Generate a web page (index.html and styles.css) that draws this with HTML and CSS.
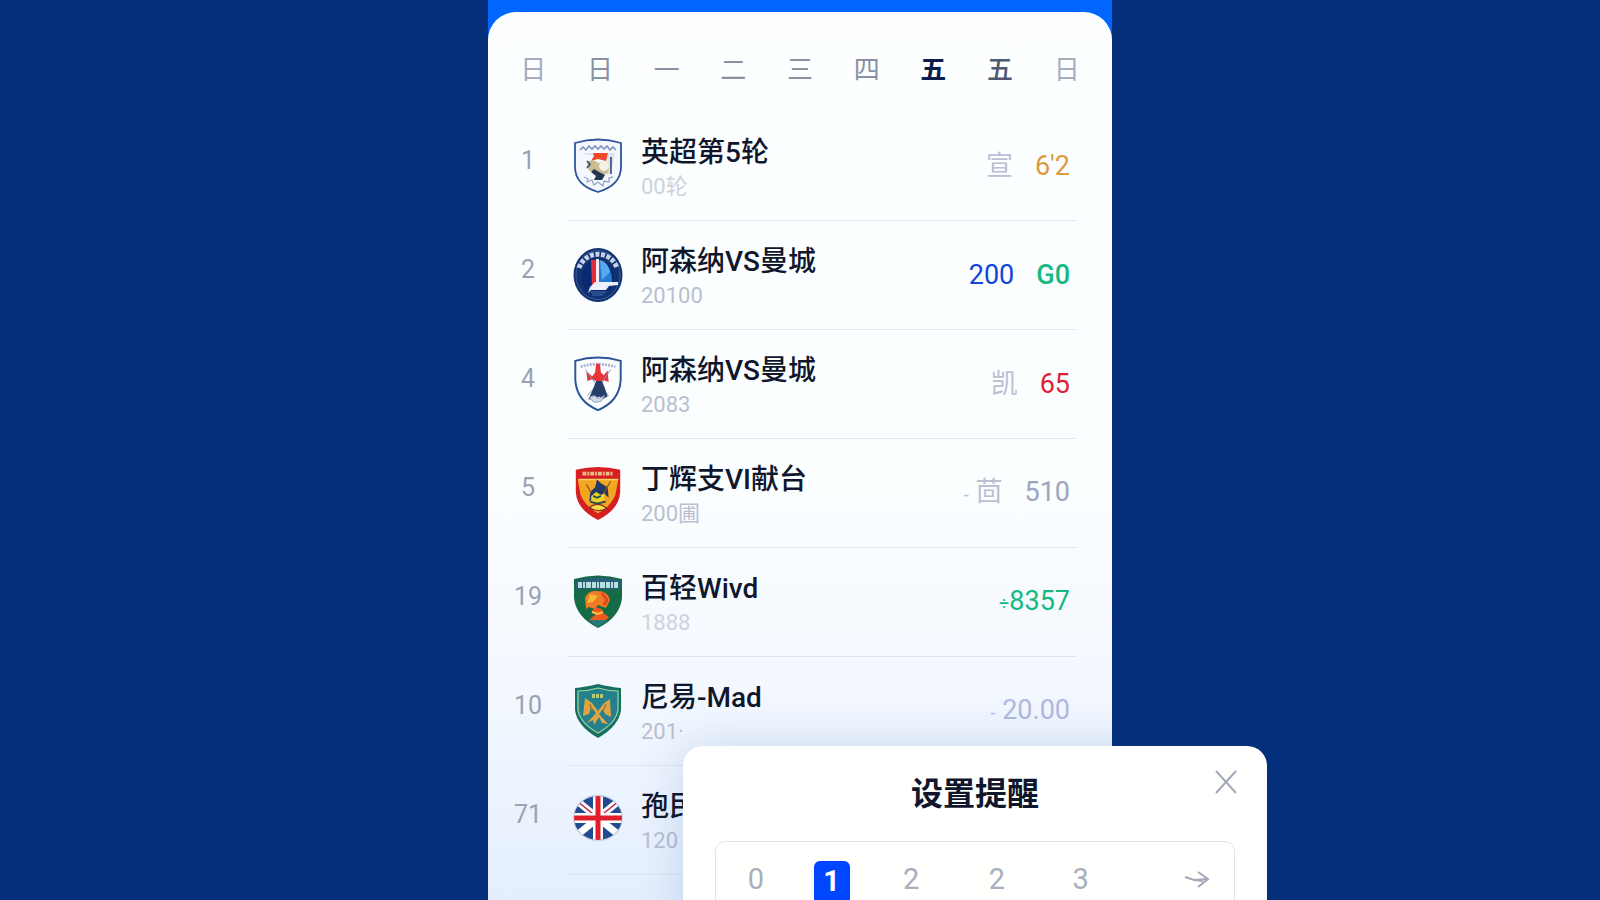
FILE: index.html
```
<!DOCTYPE html>
<html lang="zh-CN">
<head>
  <meta charset="UTF-8">
  <meta name="viewport" content="width=device-width, initial-scale=1.0">
  <title>赛程提醒</title>
  <link rel="stylesheet" href="styles.css">
</head>
<body>
  <div class="stage">
    <main class="phone">
      <div class="card">
        <nav class="weekdays">
          <button class="light">日</button>
          <button>日</button>
          <button>一</button>
          <button>二</button>
          <button>三</button>
          <button>四</button>
          <button class="active">五</button>
          <button class="dark">五</button>
          <button class="light">日</button>
        </nav>

        <ul class="match-list">
          <li class="match">
            <span class="rank">1</span>
            <div class="match-main">
              <svg class="badge" viewBox="0 0 50 54">
                <path d="M2 4Q25-3 48 4V28Q48 46 25 53Q2 46 2 28Z" fill="#f4f7fd" stroke="#2c559d" stroke-width="1.8"/>
                <path d="M7 11l3-3 3 3 3-4 3 3 3-3 3 3 3-3 3 3 3-3 3 4 3-3 3 3" fill="none" stroke="#7f95be" stroke-width="1.6"/>
                <path d="M8 14h34l-5 21-3 2V20z" fill="#dbe2f0"/>
                <path d="M20 14h15l-2 8-8-2-7 2 3-5z" fill="#f04a2b"/>
                <path d="M14 23q7-4 11 1 7-3 11 3 1 7-5 9l-7-2-8-2z" fill="#c9bd93"/>
                <circle cx="31" cy="27" r="5" fill="#f4f1e4"/>
                <path d="M21 30l5 3 6 3-3 5h-8l2-4-5-4z" fill="#23364f"/>
                <path d="M14 22l3 3-3 4M38 18v17" fill="none" stroke="#39496f" stroke-width="1.6"/>
                <path d="M11 38l4 2-1 3 5-2 2 5 4-3 5 4 1-5 5 1v-4l4-1" fill="none" stroke="#97a5c6" stroke-width="1.3"/>
              </svg>
              <div class="match-text">
                <h3>英超第5轮</h3>
                <p class="faint">00轮</p>
              </div>
              <div class="values">
                <span class="tag">宣</span>
                <span class="orange">6'2</span>
              </div>
            </div>
          </li>

          <li class="match">
            <span class="rank">2</span>
            <div class="match-main">
              <svg class="badge" viewBox="0 0 50 54">
                <ellipse cx="25" cy="27" rx="24.5" ry="27" fill="#12316f"/>
                <ellipse cx="25" cy="27" rx="22" ry="24.5" fill="none" stroke="#355c9f" stroke-width="1"/>
                <path d="M6 20A20 20 0 0 1 44 20" fill="none" stroke="#c6d1e8" stroke-width="5" stroke-dasharray="4 1.6"/>
                <ellipse cx="25" cy="30" rx="16" ry="18" fill="#092a73"/>
                <path d="M25 12q14 3 14 22H25z" fill="#2879d2"/>
                <path d="M27 12q8 2 10 12l-8 8z" fill="#58a8ed"/>
                <path d="M18 12h5l1 25-5 3z" fill="#e22d3c"/>
                <path d="M23 11h3v25h-3z" fill="#f6edf4"/>
                <path d="M22 34h23v3l-9 1-3 4H18l-3 3 2-6z" fill="#eaf1fb"/>
                <path d="M17 43h18l-6 5h-9z" fill="#284d8d"/>
              </svg>
              <div class="match-text">
                <h3>阿森纳VS曼城</h3>
                <p>20100</p>
              </div>
              <div class="values">
                <span class="blue">200</span>
                <span class="green strong">G0</span>
              </div>
            </div>
          </li>

          <li class="match">
            <span class="rank">4</span>
            <div class="match-main">
              <svg class="badge" viewBox="0 0 50 58">
                <path d="M1.5 5Q25-2 48.5 5V25Q47 47 25 56Q3 47 1.5 25Z" fill="#fcfdff" stroke="#285495" stroke-width="2"/>
                <path d="M7 11q18-5 36 0" fill="none" stroke="#a8b4cb" stroke-width="3" stroke-dasharray="2 1.2"/>
                <path d="M23 8h4l1 9 3 3 4-5 1 12-5-2-6 2-6-3-5 2-1-10 6 5 3-4z" fill="#e9343a"/>
                <path d="M12 14l10 14M38 14L29 28M14 41l8-9M36 41l-9-10" stroke="#8593af" stroke-width="1"/>
                <path d="M23 26h6l3 7 3 9-6 3-2-3-4 2-8 1 5-11z" fill="#263e68"/>
                <path d="M16 43l5-2 5 3 6-3-4 6-7 1z" fill="#d1dbea" stroke="#8e9fbe" stroke-width="1"/>
              </svg>
              <div class="match-text">
                <h3>阿森纳VS曼城</h3>
                <p>2083</p>
              </div>
              <div class="values">
                <span class="tag">凯</span>
                <span class="red">65</span>
              </div>
            </div>
          </li>

          <li class="match">
            <span class="rank">5</span>
            <div class="match-main">
              <svg class="badge" viewBox="0 0 50 58">
                <path d="M2 5Q25-1 48 5V28Q47 46 25 57Q3 46 2 28Z" fill="#d51f20"/>
                <path d="M4 15H46L43 31Q38 43 25 50Q12 43 7 31Z" fill="#f3a620"/>
                <path d="M5 15h41" stroke="#f8d266" stroke-width="1.4"/>
                <path d="M9 9h32" stroke="#efba8c" stroke-width="4" stroke-dasharray="4 1 2 1"/>
                <path d="M24 15l4 4 7 4 1 11-4-4-3 5-8-1-5 4 1-10 5-5z" fill="#253763"/>
                <path d="M13 20l5 9M38 17l-7 12" stroke="#825b32" stroke-width="1.2"/>
                <path d="M18 32l5-4 5 3 4-2-1 7-6 3-7-2z" fill="#e7d52c"/>
                <path d="M20 32l4 2 4-2M17 38l7 2 9-2" fill="none" stroke="#254d53" stroke-width="1.8"/>
                <path d="M16 44q9-7 18 1-9 5-18-1z" fill="#f9db46" stroke="#7e3123" stroke-width="1.3"/>
              </svg>
              <div class="match-text">
                <h3>丁辉支VI献台</h3>
                <p>200圃</p>
              </div>
              <div class="values">
                <span class="tag"><small>-</small> 茴</span>
                <span class="gray">510</span>
              </div>
            </div>
          </li>

          <li class="match">
            <span class="rank">19</span>
            <div class="match-main">
              <svg class="badge" viewBox="0 0 50 54">
                <path d="M1 4Q25-3 49 4V23Q47 42 25 53Q3 42 1 23Z" fill="#146b45"/>
                <path d="M2 6Q25-1 48 6L47 14H3Z" fill="#285f79"/>
                <path d="M5 10h40" stroke="#b8dfdf" stroke-width="6" stroke-dasharray="4 1 2 1 5 1"/>
                <path d="M12 23q3-8 12-7 11 0 13 9l-4 8-8-3-3 4-6-2-3 2z" fill="#f17b24"/>
                <path d="M17 19l8 2-5 6-6 1z" fill="#f6b737"/>
                <path d="M29 18l5 7-3 5" fill="none" stroke="#dc4724" stroke-width="3"/>
                <path d="M22 32l7 2 1 4 6 4-3 3H16l6-5-3-4z" fill="#ed5a21"/>
                <path d="M19 37l6 2 5-2" fill="none" stroke="#fac54a" stroke-width="2"/>
                <path d="M15 45h20l-10 7z" fill="#247a78"/>
              </svg>
              <div class="match-text">
                <h3>百轻Wivd</h3>
                <p class="faint">1888</p>
              </div>
              <div class="values">
                <span class="green"><small>÷</small>8357</span>
              </div>
            </div>
          </li>

          <li class="match">
            <span class="rank">10</span>
            <div class="match-main">
              <svg class="badge" viewBox="0 0 50 56">
                <path d="M2 5Q12 4 25 1Q38 4 48 5V27Q46 43 25 55Q4 43 2 27Z" fill="#147164"/>
                <path d="M5 8Q15 8 25 5Q35 8 45 8V27Q43 40 25 50Q7 40 5 27Z" fill="#24808a" stroke="#a6d5a0" stroke-width="1.2"/>
                <path d="M19 13h12" stroke="#b9cb71" stroke-width="4" stroke-dasharray="3 1"/>
                <path d="M12 15l7 5 6 8 6-8 6-4 1 18-6-3-2-5-4 5 9 10-6-1-3-6-5 8-1-5-6 3 9-10-5-6-2 7-6 2z" fill="#e0a344"/>
                <path d="M17 21l2 7M33 21l-3 7" stroke="#a07b34" stroke-width="1.5"/>
              </svg>
              <div class="match-text">
                <h3>尼易-Mad</h3>
                <p>201·</p>
              </div>
              <div class="values">
                <span class="pale"><small>-</small> 20.00</span>
              </div>
            </div>
          </li>

          <li class="match">
            <span class="rank">71</span>
            <div class="match-main">
              <svg class="badge" viewBox="0 0 50 54">
                <defs>
                  <clipPath id="flag"><ellipse cx="25" cy="25" rx="24" ry="22"/></clipPath>
                </defs>
                <ellipse cx="25" cy="25" rx="25" ry="23.5" fill="#cfd8e8"/>
                <g clip-path="url(#flag)">
                  <path d="M0 0h50v50H0z" fill="#214b91"/>
                  <path d="M-2 3l54 44M52 3L-2 47" stroke="#fff" stroke-width="7"/>
                  <path d="M-2 3l27 22M52 3L25 25" stroke="#c12f4a" stroke-width="1.5"/>
                  <path d="M25 0v50M0 25h50" stroke="#fff" stroke-width="10"/>
                  <path d="M25 0v50M0 25h50" stroke="#df1f2b" stroke-width="5"/>
                </g>
              </svg>
              <div class="match-text">
                <h3>孢民</h3>
                <p>120</p>
              </div>
            </div>
          </li>

          <li class="match">
            <span class="rank"></span>
            <div class="match-main">
              <svg class="badge" viewBox="0 0 50 56">
                <circle cx="25" cy="23" r="24" fill="#a9b3c8"/>
              </svg>
            </div>
          </li>
        </ul>
      </div>
    </main>

    <section class="dialog" role="dialog" aria-labelledby="dialog-title">
      <h2 id="dialog-title">设置提醒</h2>
      <button class="close" aria-label="关闭">
        <svg viewBox="0 0 24 24"><path d="M2 1l20 22M22 1L2 23"/></svg>
      </button>
      <div class="picker">
        <button>0</button>
        <button class="selected">1</button>
        <button>2</button>
        <button>2</button>
        <button>3</button>
        <button class="next" aria-label="下一页">
          <svg viewBox="0 0 26 20"><path d="M1 8l9 3 14-1M14 3l10 7-10 8M10 11l9 1"/></svg>
        </button>
      </div>
    </section>
  </div>
</body>
</html>
```
FILE: styles.css
```
* {
  box-sizing: border-box;
}
body {
  margin: 0;
  font-family: Roboto, "Noto Sans CJK SC", sans-serif;
  background-color: #052f7b;
}
h2, h3, p, ul {
  margin: 0;
  padding: 0;
}
button {
  border: none;
  padding: 0;
  background: none;
  font-family: inherit;
  cursor: pointer;
}
.stage {
  position: relative;
  height: 100vh;
  overflow: hidden;
}
.phone {
  width: 39%;
  min-width: 560px;
  margin: 0 auto;
  padding-top: 12px;
  background-color: #0066ff;
}
.card {
  border-radius: 28px 28px 0 0;
  background: linear-gradient(#fcfeff 0, #fbfeff 480px, #f3f8ff 680px, #e3eefd 900px);
}

/* 星期栏 */
.weekdays {
  display: grid;
  grid-template-columns: repeat(9, 1fr);
  padding: 40px 12px 24px;
}
.weekdays button {
  font-size: 26px;
  line-height: 36px;
  color: #8991a3;
}
.weekdays .light {
  color: #a5acbd;
}
.weekdays .active {
  color: #0c1d4c;
  font-weight: bold;
}
.weekdays .dark {
  color: #4d5970;
  font-weight: 500;
}

/* 比赛列表 */
.match-list {
  list-style: none;
}
.match {
  display: flex;
  height: 109px;
  padding-right: 36px;
}
.rank {
  display: flex;
  align-items: center;
  justify-content: center;
  width: 80px;
  padding-bottom: 12px;
  font-size: 25px;
  color: #9ba1b3;
}
.match-main {
  flex: 1;
  display: flex;
  align-items: center;
  padding: 0 6px 0 5px;
  border-bottom: 1px solid #dfe4ee;
}
.badge {
  width: 50px;
  height: 56px;
  margin-right: 18px;
}
.match-text {
  flex: 1;
  padding-top: 2px;
  white-space: nowrap;
}
.match-text h3 {
  font-size: 28px;
  line-height: 40px;
  font-weight: 500;
  color: #10172c;
}
.match-text p {
  font-size: 22px;
  line-height: 28px;
  color: #b9bfd0;
}
.match-text .faint {
  color: #cdd2de;
}
.values {
  display: flex;
  gap: 22px;
  font-size: 27px;
  line-height: 36px;
}
.values small {
  font-size: 18px;
}
.tag {
  color: #b9c0d4;
}
.orange {
  color: #dc9a3f;
}
.blue {
  color: #1047d8;
}
.green {
  color: #16b982;
}
.strong {
  font-weight: 500;
}
.red {
  color: #e01f35;
}
.gray {
  color: #9da4bd;
}
.pale {
  color: #b0b9de;
}

/* 提醒弹窗 */
.dialog {
  position: absolute;
  top: 746px;
  left: 683px;
  width: 584px;
  padding: 0 32px 32px;
  border-radius: 20px 20px 0 0;
  background-color: #fffffe;
  box-shadow: 0 0 48px rgba(10, 60, 150, 0.16);
}
.dialog h2 {
  padding: 24px 0 23px;
  text-align: center;
  font-size: 32px;
  line-height: 48px;
  font-weight: bold;
  color: #10172c;
}
.close {
  position: absolute;
  top: 24px;
  right: 29px;
}
.close svg {
  display: block;
  width: 24px;
  height: 24px;
}
.close path,
.next path {
  fill: none;
  stroke: #a3a9b8;
  stroke-width: 2;
}
.picker {
  display: grid;
  grid-template-columns: 20fr 18fr 22fr 21fr 21fr 28fr;
  align-items: start;
  justify-items: center;
  padding: 19px 0 24px;
  border: 1px solid #dfe3ea;
  border-radius: 10px;
}
.picker button {
  width: 36px;
  font-size: 29px;
  line-height: 36px;
  color: #a9afbd;
}
.picker .selected {
  border-radius: 6px;
  padding-bottom: 8px;
  line-height: 40px;
  font-weight: bold;
  color: #fff;
  background-color: #0046ff;
}
.picker .next {
  justify-self: end;
  width: 26px;
  margin-right: 24px;
}
.next svg {
  display: block;
  width: 26px;
  height: 20px;
  margin-top: 8px;
}
```
